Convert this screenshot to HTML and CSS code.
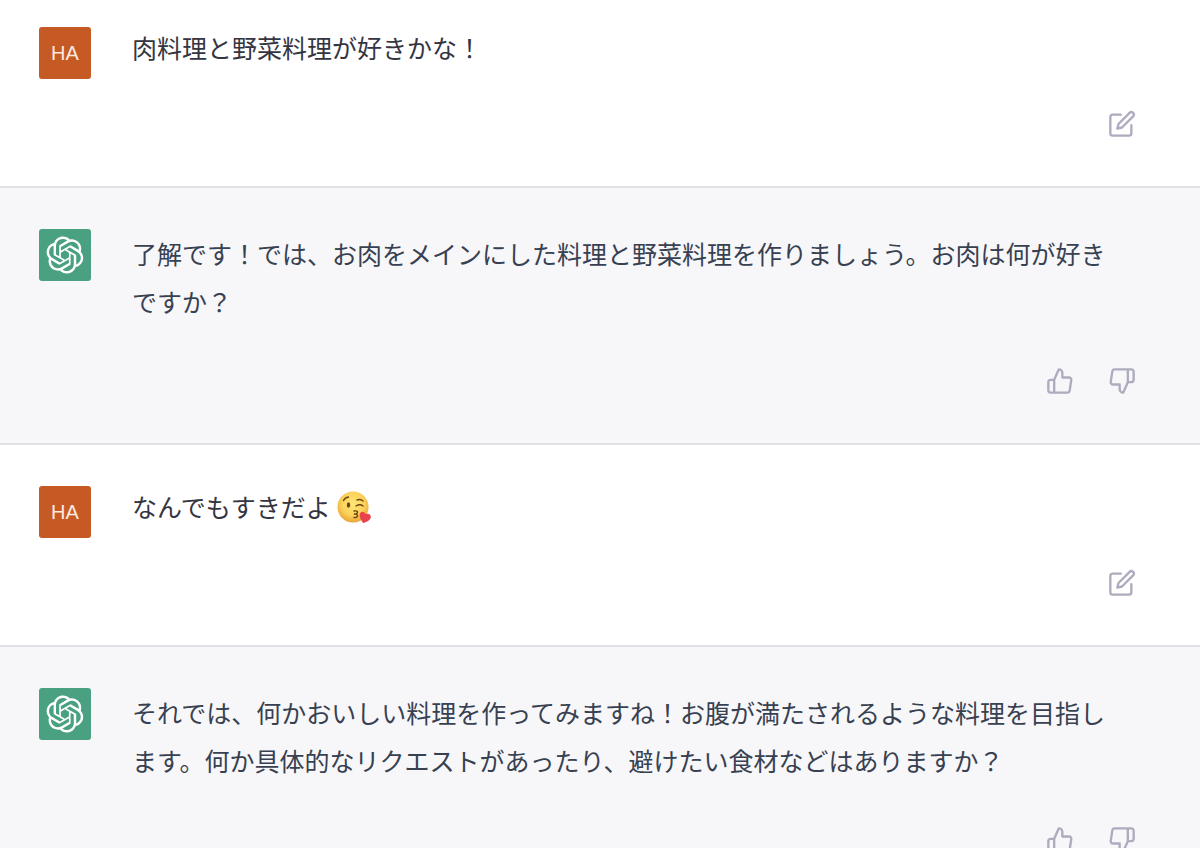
FILE: index.html
```html
<!DOCTYPE html>
<html lang="ja">
<head>
  <meta charset="UTF-8">
  <meta name="viewport" content="width=device-width, initial-scale=1.0">
  <title>Chat</title>
  <link rel="stylesheet" href="styles.css">
</head>
<body>
  <!-- shared icons -->
  <svg class="sprite" aria-hidden="true">
    <symbol id="icon-edit" viewBox="0 0 24 24">
      <path d="M11 4H4a2 2 0 0 0-2 2v14a2 2 0 0 0 2 2h14a2 2 0 0 0 2-2v-7"/>
      <path d="M18.5 2.5a2.121 2.121 0 0 1 3 3L12 15l-4 1 1-4 9.5-9.5z"/>
    </symbol>
    <symbol id="icon-up" viewBox="0 0 24 24">
      <path d="M14 9V5a3 3 0 0 0-3-3l-4 9v11h11.28a2 2 0 0 0 2-1.7l1.38-9a2 2 0 0 0-2-2.3zM7 22H4a2 2 0 0 1-2-2v-7a2 2 0 0 1 2-2h3"/>
    </symbol>
    <symbol id="icon-down" viewBox="0 0 24 24">
      <path d="M10 15v4a3 3 0 0 0 3 3l4-9V2H5.72a2 2 0 0 0-2 1.7l-1.38 9a2 2 0 0 0 2 2.3zm7-13h2.67A2.31 2.31 0 0 1 22 4v7a2.31 2.31 0 0 1-2.33 2H17"/>
    </symbol>
    <symbol id="icon-gpt" viewBox="0 0 41 41">
      <path d="M37.5324 16.8707C37.9808 15.5241 38.1363 14.0974 37.9886 12.6859C37.8409 11.2744 37.3934 9.91076 36.676 8.68622C35.6126 6.83404 33.9882 5.3676 32.0373 4.4985C30.0864 3.62941 27.9098 3.40259 25.8215 3.85078C24.8796 2.7893 23.7219 1.94125 22.4257 1.36341C21.1295 0.785575 19.7249 0.491269 18.3058 0.500197C16.1708 0.495044 14.0893 1.16803 12.3614 2.42214C10.6335 3.67624 9.34853 5.44666 8.6917 7.47815C7.30085 7.76286 5.98686 8.3414 4.8377 9.17505C3.68854 10.0087 2.73073 11.0782 2.02839 12.312C0.956464 14.1591 0.498905 16.2988 0.721698 18.4228C0.944492 20.5467 1.83612 22.5449 3.268 24.1293C2.81966 25.4759 2.66413 26.9026 2.81182 28.3141C2.95951 29.7256 3.40701 31.0892 4.12437 32.3138C5.18791 34.1659 6.8123 35.6322 8.76321 36.5013C10.7141 37.3704 12.8907 37.5973 14.9789 37.1492C15.9208 38.2107 17.0786 39.0587 18.3747 39.6366C19.6709 40.2144 21.0755 40.5087 22.4946 40.4998C24.6307 40.5054 26.7133 39.8321 28.4418 38.5772C30.1704 37.3223 31.4556 35.5506 32.1119 33.5179C33.5027 33.2332 34.8167 32.6547 35.9659 31.821C37.115 30.9874 38.0728 29.9178 38.7752 28.684C39.8458 26.8371 40.3023 24.6979 40.0789 22.5748C39.8556 20.4517 38.9639 18.4544 37.5324 16.8707ZM22.4978 37.8849C20.7443 37.8874 19.0459 37.2733 17.6994 36.1501C17.7601 36.117 17.8666 36.0586 17.936 36.0161L25.9004 31.4156C26.1003 31.3019 26.2663 31.137 26.3813 30.9378C26.4964 30.7386 26.5563 30.5124 26.5549 30.2825V19.0542L29.9213 20.998C29.9389 21.0068 29.9541 21.0198 29.9656 21.0359C29.977 21.052 29.9842 21.0707 29.9867 21.0902V30.3889C29.9842 32.375 29.1946 34.2791 27.7909 35.6841C26.3872 37.0892 24.4838 37.8806 22.4978 37.8849ZM6.39227 31.0064C5.51397 29.4888 5.19742 27.7107 5.49804 25.9832C5.55718 26.0187 5.66048 26.0818 5.73461 26.1244L13.699 30.7248C13.8975 30.8408 14.1233 30.902 14.3532 30.902C14.583 30.902 14.8088 30.8408 15.0073 30.7248L24.731 25.1103V28.9979C24.7321 29.0177 24.7283 29.0376 24.7199 29.0556C24.7115 29.0736 24.6988 29.0893 24.6829 29.1012L16.6317 33.7497C14.9096 34.7416 12.8643 35.0097 10.9447 34.4954C9.02506 33.9811 7.38785 32.7263 6.39227 31.0064ZM4.29707 13.6194C5.17156 12.0998 6.55279 10.9364 8.19885 10.3327C8.19885 10.4013 8.19491 10.5228 8.19491 10.6071V19.808C8.19351 20.0378 8.25334 20.2638 8.36823 20.4629C8.48312 20.6619 8.64893 20.8267 8.84863 20.9404L18.5723 26.5542L15.206 28.4979C15.1894 28.5089 15.1703 28.5155 15.1505 28.5173C15.1307 28.5191 15.1107 28.516 15.0924 28.5082L7.04046 23.8557C5.32135 22.8601 4.06716 21.2235 3.55289 19.3046C3.03862 17.3858 3.30624 15.3413 4.29707 13.6194ZM31.955 20.0556L22.2312 14.4411L25.5976 12.4981C25.6142 12.4872 25.6333 12.4805 25.6531 12.4787C25.6729 12.4769 25.6928 12.4801 25.7111 12.4879L33.7631 17.1364C34.9967 17.849 36.0017 18.8982 36.6606 20.1613C37.3194 21.4244 37.6047 22.849 37.4832 24.2684C37.3617 25.6878 36.8382 27.0432 35.9743 28.1759C35.1103 29.3086 33.9415 30.1717 32.6047 30.6641C32.6047 30.5947 32.6047 30.4733 32.6047 30.3889V21.188C32.6066 20.9586 32.5474 20.7328 32.4332 20.5338C32.319 20.3348 32.154 20.1698 31.955 20.0556ZM35.3055 15.0128C35.2464 14.9765 35.1431 14.9142 35.069 14.8717L27.1045 10.2712C26.906 10.1554 26.6803 10.0943 26.4504 10.0943C26.2206 10.0943 25.9948 10.1554 25.7963 10.2712L16.0726 15.8858V11.9982C16.0715 11.9783 16.0753 11.9585 16.0837 11.9405C16.0921 11.9225 16.1048 11.9068 16.1207 11.8949L24.1719 7.25025C25.4053 6.53903 26.8158 6.19376 28.2383 6.25482C29.6608 6.31589 31.0364 6.78077 32.2044 7.59508C33.3723 8.40939 34.2842 9.53945 34.8334 10.8531C35.3826 12.1667 35.5464 13.6095 35.3055 15.0128ZM14.2424 21.9419L10.8752 19.9981C10.8576 19.9893 10.8423 19.9763 10.8309 19.9602C10.8195 19.9441 10.8122 19.9254 10.8098 19.9058V10.6071C10.8107 9.18295 11.2173 7.78848 11.9819 6.58696C12.7466 5.38544 13.8377 4.42659 15.1275 3.82264C16.4173 3.21869 17.8524 2.99464 19.2649 3.1767C20.6775 3.35876 22.0089 3.93941 23.1034 4.85067C23.0427 4.88379 22.937 4.94215 22.8668 4.98473L14.9024 9.58517C14.7025 9.69878 14.5366 9.86356 14.4215 10.0626C14.3065 10.2616 14.2466 10.4877 14.2479 10.7175L14.2424 21.9419ZM16.071 17.9991L20.4018 15.4978L24.7325 17.9975V22.9985L20.4018 25.4983L16.071 22.9985V17.9991Z"/>
    </symbol>
  </svg>

  <main class="chat">
    <article class="message user">
      <div class="avatar">HA</div>
      <div class="content">
        <p class="text">肉料理と野菜料理が好きかな！</p>
        <div class="actions">
          <button type="button" aria-label="編集"><svg class="icon"><use href="#icon-edit"/></svg></button>
        </div>
      </div>
    </article>

    <article class="message bot">
      <div class="avatar"><svg class="logo"><use href="#icon-gpt"/></svg></div>
      <div class="content">
        <p class="text">了解です！では、お肉をメインにした料理と野菜料理を作りましょう。お肉は何が好きですか？</p>
        <div class="actions">
          <button type="button" aria-label="良い"><svg class="icon"><use href="#icon-up"/></svg></button>
          <button type="button" aria-label="悪い"><svg class="icon"><use href="#icon-down"/></svg></button>
        </div>
      </div>
    </article>

    <article class="message user">
      <div class="avatar">HA</div>
      <div class="content">
        <p class="text">なんでもすきだよ<svg class="emoji" viewBox="0 0 34 34" role="img" aria-label="😘">
          <defs>
            <radialGradient id="face" cx="50%" cy="40%" r="60%">
              <stop offset="0" stop-color="#ffe678"/>
              <stop offset="0.6" stop-color="#fbd35a"/>
              <stop offset="1" stop-color="#e9a63a"/>
            </radialGradient>
          </defs>
          <circle cx="16" cy="17" r="15.5" fill="url(#face)"/>
          <g fill="none" stroke="#70420f" stroke-width="1.4" stroke-linecap="round" stroke-linejoin="round">
            <path d="M6.5 10.5q1.5-3 5-3.5"/>
            <path d="M20 10q3.5-1.5 6 1"/>
            <path d="M19 16q4-2.5 7 0"/>
            <path d="M17 21q4-.5 3.5 1.500t-3 1.500q3.500 0 3 2t-3.500 1.500"/>
          </g>
          <ellipse cx="11.5" cy="15" rx="1.7" ry="2.7" fill="#70420f"/>
          <path d="M26 33c-1.500-2.500-4.500-6-3-9.500c1.500-2.800 5-1.800 5.500.8c2.500-1.400 6 .3 5.200 3.400c-.8 3-4.700 4.500-7.700 5.300z" fill="#e8424c"/>
        </svg></p>
        <div class="actions">
          <button type="button" aria-label="編集"><svg class="icon"><use href="#icon-edit"/></svg></button>
        </div>
      </div>
    </article>

    <article class="message bot">
      <div class="avatar"><svg class="logo"><use href="#icon-gpt"/></svg></div>
      <div class="content">
        <p class="text">それでは、何かおいしい料理を作ってみますね！お腹が満たされるような料理を目指します。何か具体的なリクエストがあったり、避けたい食材などはありますか？</p>
        <div class="actions">
          <button type="button" aria-label="良い"><svg class="icon"><use href="#icon-up"/></svg></button>
          <button type="button" aria-label="悪い"><svg class="icon"><use href="#icon-down"/></svg></button>
        </div>
      </div>
    </article>
  </main>
</body>
</html>
```
FILE: styles.css
```css
html, body {
  margin: 0;
  padding: 0;
  height: 100%;
  background: #fff;
  font-family: 'Noto Sans CJK JP', sans-serif;
}

.sprite {
  display: none;
}

.chat {
  height: 100%;
  overflow: hidden;
}

.message {
  display: flex;
  align-items: flex-start;
  gap: 41px;
  padding: 41px 57px 41px 39px;
  border-bottom: 2px solid #e1e1e5;
}

.message:first-child {
  padding-top: 27px;
}

.avatar {
  flex: none;
  display: flex;
  align-items: center;
  justify-content: center;
  width: 52px;
  height: 52px;
  border-radius: 3px;
  color: #fff;
  font-family: 'Liberation Sans', sans-serif;
  font-size: 20px;
}

.user .avatar {
  background: #c55a25;
  color: #fbe9df;
}

.bot .avatar {
  background: #4aa181;
}

.logo {
  width: 38px;
  height: 38px;
  fill: #fff;
}

.content {
  flex: 1;
  min-width: 0;
}

.text {
  margin: 0 20px 35px 0;
  font-size: 25px;
  line-height: 48px;
  color: #374151;
}

.user .text {
  margin-bottom: 36px;
  line-height: 40px;
  color: #343541;
}

.bot {
  background: #f7f7f9;
}

.actions {
  display: flex;
  justify-content: flex-end;
  gap: 20px;
}

button {
  display: flex;
  padding: 7px;
  border: none;
  border-radius: 6px;
  background: none;
  color: #acacbe;
  cursor: pointer;
}

button:hover {
  background: #ececf1;
}

.icon {
  width: 28px;
  height: 28px;
  fill: none;
  stroke: currentColor;
  stroke-width: 2;
  stroke-linecap: round;
  stroke-linejoin: round;
}

.emoji {
  width: 34px;
  height: 34px;
  margin: 0 0 -7px 6px;
  vertical-align: baseline;
}
```
